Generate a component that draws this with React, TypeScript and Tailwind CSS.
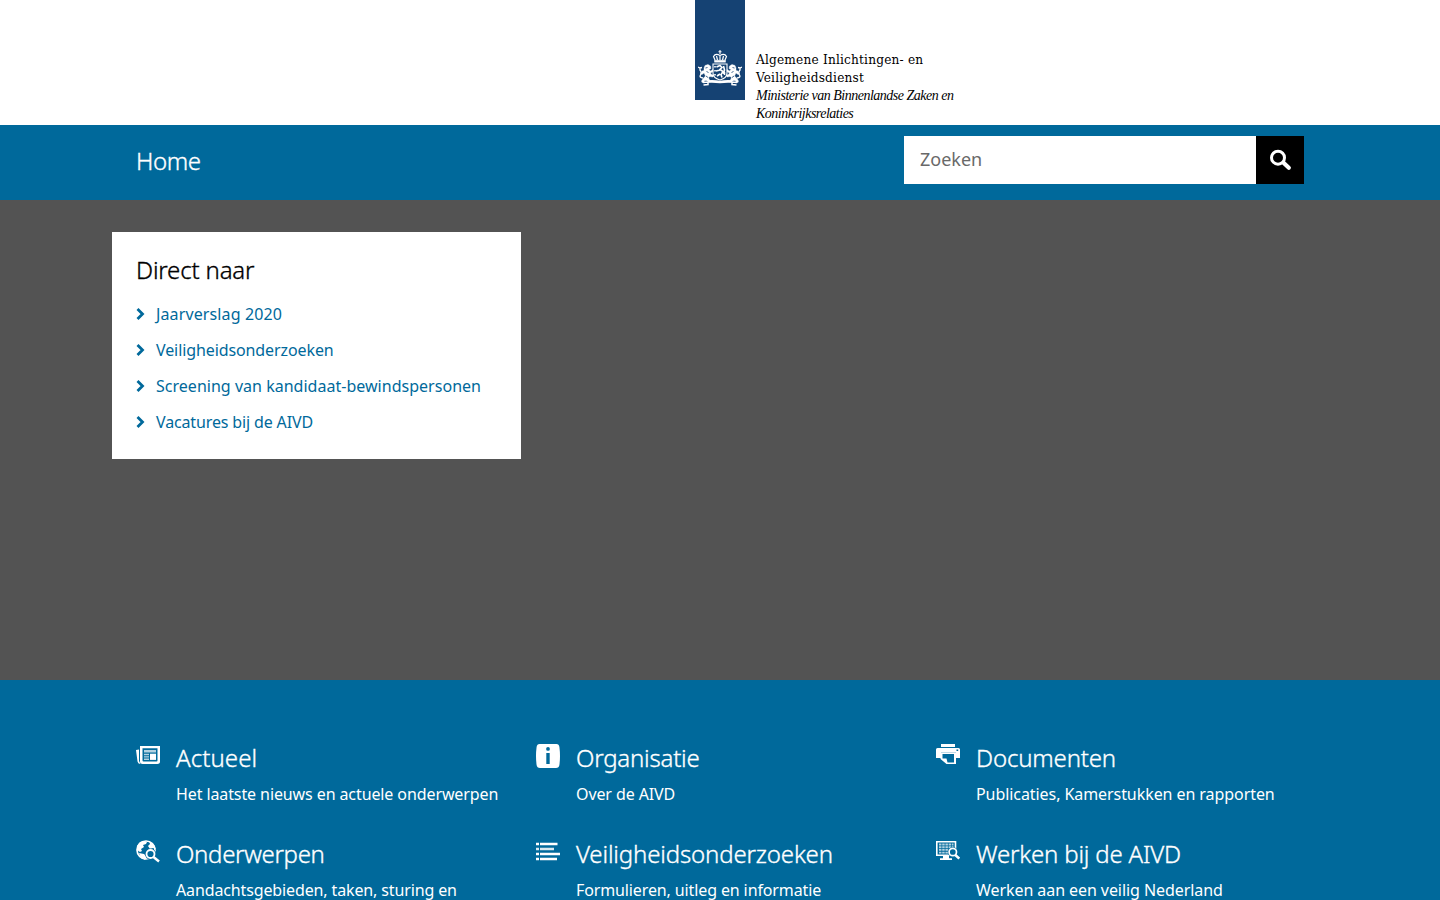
import React from "react";

const quickLinks = [
  { label: "Jaarverslag 2020", fit: "tracking-[0.12px]" },
  { label: "Veiligheidsonderzoeken", fit: "tracking-[-0.1px]" },
  { label: "Screening van kandidaat-bewindspersonen", fit: "tracking-[0.02px]" },
  { label: "Vacatures bij de AIVD", fit: "tracking-[-0.14px]" },
];

function NewsIcon() {
  return (
    <svg viewBox="0 0 24 24" className="size-6" fill="#fff">
      <path d="M0 6 3 5.500V17l1.500 3Q2 20 1.500 17.500Z" />
      <path fillRule="evenodd" d="M4 2h20v15.500a2.500 2.500 0 0 1-2.500 2.500h-15A2.500 2.500 0 0 1 4 17.500ZM6.500 4.300v12.200q0 1 1 1H20.500q1 0 1-1V4.300Z" />
      <path d="M8 6h12v2.500H8zM8 9.700h5v1.500H8zM8 12.300h5v1.300H8zM8 14.600h5v1.300H8z" opacity=".7" />
      <path d="M14 9.700h6v6.200h-6z" />
    </svg>
  );
}

function InfoIcon() {
  return (
    <svg viewBox="0 0 24 24" className="size-6">
      <path fill="#fff" d="M3.500 0h17Q23 0 23.400 3q1.200 9 0 18-.4 3-3.400 3h-16Q1 24 .6 21q-1.200-9 0-18Q1 0 3.500 0Z" />
      <circle cx="12" cy="4.900" r="1.900" fill="#00699b" />
      <path fill="#00699b" d="M10.300 9h3.400v11h-3.400z" />
    </svg>
  );
}

function PrinterIcon() {
  return (
    <svg viewBox="0 0 24 24" className="size-6">
      <path fill="#fff" d="M5 0h14v3H5z" />
      <path fill="#fff" fillRule="evenodd" d="M1.500 4h21A1.500 1.500 0 0 1 24 5.500V14h-4V8.500H5V14H0V5.500A1.500 1.500 0 0 1 1.500 4ZM20.500 5.500V7h1.700V5.500Z" />
      <path fill="#fff" fillRule="evenodd" d="M4.500 8.500h15.500v11.500H10.500L4.500 15ZM6.500 10v4.500h4l1 4h6.500V10Z" />
    </svg>
  );
}

function GlobeIcon() {
  return (
    <svg viewBox="0 0 24 24" className="size-6" fill="none" stroke="#fff">
      <circle cx="10" cy="10" r="9" strokeWidth="1.700" />
      <path fill="#fff" stroke="none" d="m1 6 3-4 4-1 3 1-1 2-3 1 1 2-3 2 1 2-2 1-3-2ZM13 1l5 4 2 4-3-1-3 1-2-3 2-2ZM3 13l5 1 3 3-2 3-4-2Z" />
      <circle cx="14.500" cy="14" r="5.500" fill="#00699b" stroke="none" />
      <circle cx="14.500" cy="14" r="4" strokeWidth="1.800" />
      <path d="m17.500 17 5.500 4.500" strokeWidth="2.500" />
    </svg>
  );
}

function ListIcon() {
  return (
    <svg viewBox="0 0 24 24" className="size-6" fill="#fff">
      <path d="M0 2.800h3v2.400H0zM4 2.800h17.500v2.400H4zM0 12.700h3v2.600H0zM4 12.700h20v2.600H4zM0 17.800h3v2.400H0zM4 17.800h17v2.400H4z" />
      <path d="M0 7.700h3v2.600H0zM4 7.700h14v2.600H4z" opacity=".85" />
    </svg>
  );
}

function MonitorIcon() {
  return (
    <svg viewBox="0 0 24 24" className="size-6" fill="none" stroke="#fff">
      <path d="M.8 1.800h18.700v13.400H.8z" strokeWidth="1.600" />
      <path d="M3 4.500h14.500M3 7.200h14.500M3 9.900h14.500M3 12.600h10" strokeDasharray="2.500 .7" strokeWidth="1.900" opacity=".7" />
      <path fill="#fff" stroke="none" d="M7 15h6v3.300h3V20H4v-1.700h3z" />
      <circle cx="16.800" cy="12" r="5" fill="#00699b" stroke="none" />
      <circle cx="16.800" cy="12" r="3.700" strokeWidth="1.700" />
      <path d="m19.300 15 4 3.500" strokeWidth="2.500" />
    </svg>
  );
}

const themes = [
  { Icon: NewsIcon, title: "Actueel", text: "Het laatste nieuws en actuele onderwerpen", titleFit: "tracking-[0.08px]", fit: "tracking-[-0.1px]" },
  { Icon: InfoIcon, title: "Organisatie", text: "Over de AIVD", titleFit: "tracking-[-0.22px]", fit: "tracking-[-0.1px]" },
  { Icon: PrinterIcon, title: "Documenten", text: "Publicaties, Kamerstukken en rapporten", titleFit: "tracking-[-0.17px]", fit: "tracking-[-0.07px]" },
  { Icon: GlobeIcon, title: "Onderwerpen", text: "Aandachtsgebieden, taken, sturing en", titleFit: "tracking-[-0.32px]", fit: "tracking-[-0.13px]" },
  { Icon: ListIcon, title: "Veiligheidsonderzoeken", text: "Formulieren, uitleg en informatie", titleFit: "tracking-[-0.15px]", fit: "tracking-[-0.12px]" },
  { Icon: MonitorIcon, title: "Werken bij de AIVD", text: "Werken aan een veilig Nederland", titleFit: "tracking-[-0.18px]", fit: "tracking-[-0.07px]" },
];

function Lion() {
  return (
    <g>
      <path
        fill="#fff"
        strokeWidth=".4"
        d="m6 18 1-2.500 3-1 2.500 1.500.5 2.500-2 1 1.500 1.500 2.500-1.500v2l-2.500 1.500 1 1.500 2 .5-.5 2-3-.5-1.500 1 1 2.500 2 1.500-2 .5-3.500-1.500-2 .5.500 1.500H4l-.5-1.500 2-3 2-2-1.500-3-2 1.500-1.500-.5L4 21l2-.5Z"
      />
      <path d="m7.500 18 2-.5M8.500 21l2 2M8 26l2 1.500" stroke="#154273" strokeWidth=".8" />
      <path d="M5 28Q1 27.500 2.500 25T2 20M0 17l2 1 2-.5M2 18v2.500" strokeWidth="1.300" />
    </g>
  );
}

function CoatOfArms() {
  return (
    <svg viewBox="0 0 44 37" className="h-[37px] w-11" fill="none" stroke="#fff">
      <path d="M22 0v4M20.500 1.700h3" strokeWidth="1.100" />
      <path d="M17 10 15.500 6.500q2-3.500 6.500-1 4.500-2.500 6.500 1L27 10M19.500 10l-1-4M24.500 10l1-4M22 5v5" strokeWidth="1.200" />
      <path d="M16.500 10.200h11v2h-11z" fill="#fff" strokeWidth=".5" />
      <path d="M15 14h14v9q0 5-7 7-7-2-7-7Z" strokeWidth="1.100" />
      <path d="m18.500 17 3.500-1.500 2 2-2 2 3 2-2 3 1 3M22 20l-4 1M22 24l-3 2M25.500 16l1 4-1 4M17 16v1.500M17 20v1.500M17 24v1.500M26.500 22v3" strokeWidth="1.600" />
      <Lion />
      <g transform="translate(44 0) scale(-1 1)">
        <Lion />
      </g>
      <path d="M10 31.500q6-.5 12 .5 6-1 12-.5" strokeWidth="2.600" />
      <path d="m5 32.500 5-.5v2.500l-4.500.5M39 32.500l-5-.5v2.500l4.500.5" strokeWidth="1.500" />
    </svg>
  );
}

export default function App() {
  return (
    <div className="flex h-[900px] w-[1440px] flex-col overflow-hidden bg-white font-['Noto_Sans',sans-serif]">
      <header className="flex h-[125px] shrink-0 pl-[695px]">
        <div className="flex h-[100px] w-[50px] items-end justify-center bg-[#154273] pb-[13px]">
          <CoatOfArms />
        </div>
        <div className="pt-[51px] pl-[11px] whitespace-nowrap text-black">
          <p className="font-['DejaVu_Serif_Condensed','DejaVu_Serif',serif] text-[13.5px] leading-[17.6px] tracking-[0.19px] [font-stretch:condensed]">
            Algemene Inlichtingen- en
            <br />
            Veiligheidsdienst
          </p>
          <p className="pt-[0.8px] font-['Liberation_Serif',serif] text-[14px] leading-[17.6px] tracking-[-0.5px] italic">
            Ministerie van Binnenlandse Zaken en
            <br />
            Koninkrijksrelaties
          </p>
        </div>
      </header>

      <nav className="flex h-[75px] shrink-0 items-start justify-between bg-[#00699b] px-[136px]">
        <a className="pt-[18px] text-2xl leading-9 font-light tracking-[-0.4px] text-white [-webkit-text-stroke:0.35px_currentColor]">Home</a>
        <form className="flex pt-[11px]">
          <div className="flex h-12 w-[352px] items-center bg-white pb-0.5 pl-4 text-lg text-[#696969]">Zoeken</div>
          <button type="button" aria-label="Zoeken" className="flex size-12 items-center justify-center bg-black">
            <svg viewBox="0 0 24 24" className="size-6" fill="none" stroke="#fff">
              <circle cx="10" cy="9.700" r="6.500" strokeWidth="3" />
              <path d="m15.500 14.800 5.300 4.900" strokeWidth="4.200" strokeLinecap="round" />
            </svg>
          </button>
        </form>
      </nav>

      <section className="h-[480px] shrink-0 bg-[#535353] px-28 pt-8">
        <div className="h-[227px] w-[409px] bg-white px-6 pt-5">
          <h2 className="text-2xl leading-9 font-light tracking-[-0.17px] whitespace-nowrap text-black [-webkit-text-stroke:0.35px_currentColor]">Direct naar</h2>
          <ul className="mt-2">
            {quickLinks.map((link) => (
              <li key={link.label} className="flex h-9 items-center whitespace-nowrap text-[#00699b]">
                <svg viewBox="0 0 9 12" className="mr-[11px] mb-px h-3 w-[9px]" fill="none" stroke="currentColor" strokeWidth="2.800">
                  <path d="m1.500 1 5 5-5 5" />
                </svg>
                <a className={link.fit}>{link.label}</a>
              </li>
            ))}
          </ul>
        </div>
      </section>

      <section className="grid h-[220px] shrink-0 grid-cols-[400px_400px_400px] content-start bg-[#00699b] pt-[60px] pl-[136px] text-white">
        {themes.map(({ Icon, title, text, titleFit, fit }) => (
          <div key={title} className="flex h-24 gap-4 whitespace-nowrap">
            <div className="pt-1">
              <Icon />
            </div>
            <div>
              <h2 className={`text-2xl leading-9 font-light [-webkit-text-stroke:0.35px_currentColor] ${titleFit}`}>{title}</h2>
              <p className={`leading-9 ${fit}`}>{text}</p>
            </div>
          </div>
        ))}
      </section>
    </div>
  );
}
